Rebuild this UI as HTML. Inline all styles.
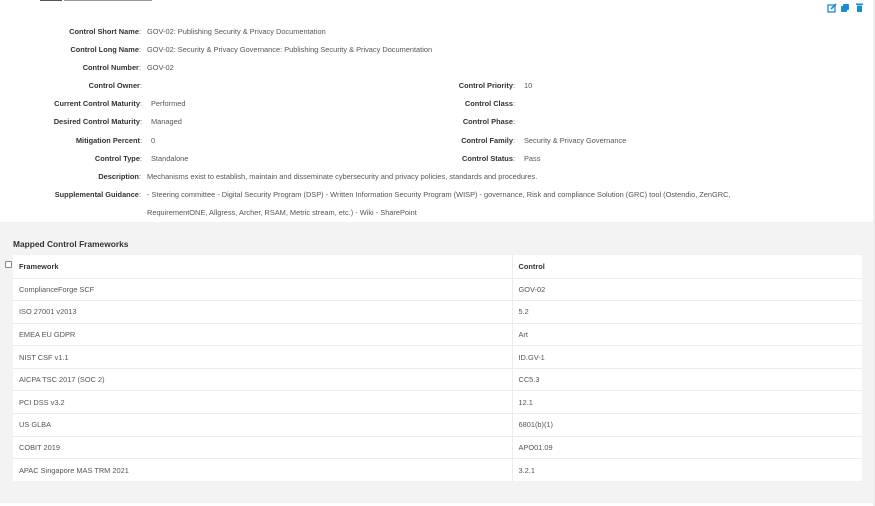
<!DOCTYPE html>
<html><head><meta charset="utf-8"><style>
*{margin:0;padding:0;box-sizing:border-box}
body{width:875px;height:506px;background:#fff;font-family:"Liberation Sans",sans-serif;font-size:7.4px;color:#555;position:relative;overflow:hidden}
.a{position:absolute;white-space:nowrap}
.l{position:absolute;white-space:nowrap;text-align:right;font-weight:bold;color:#333}
.l span{font-weight:normal;color:#555}
.grey{position:absolute;left:0;top:222px;width:873px;height:281px;background:#f3f3f3}
table{position:absolute;left:13px;top:255px;width:849px;border-collapse:collapse;background:#fff}
td{height:22.6px;padding-left:6px;border-bottom:1px solid #ececec;color:#555}
td:first-child{width:499px;border-right:1px solid #ececec}
th{height:23px;text-align:left;padding-left:6px;font-weight:bold;color:#333;border-bottom:1px solid #ececec}
th:first-child{border-right:1px solid #ececec}
</style></head><body>
<div class="a" style="left:40px;top:0;width:22px;height:1px;background:#555"></div>
<div class="a" style="left:64px;top:0;width:88px;height:1px;background:#999"></div>
<div class="a" style="left:873px;top:0;width:2px;height:506px;background:#eee"></div>
<svg class="a" style="left:827px;top:3px" width="40" height="10" viewBox="0 0 40 10">
<rect x="1" y="2" width="7" height="7" fill="none" stroke="#1a8bd6" stroke-width="1.3"/><path d="M4 6 L9 1" stroke="#1a8bd6" stroke-width="1.6"/>
<rect x="16" y="1" width="6" height="6" rx="1" fill="#1a8bd6"/><rect x="14" y="3" width="6" height="6" rx="1" fill="#1a8bd6"/>
<rect x="29" y="0.5" width="7" height="1.5" fill="#1a8bd6"/><rect x="30" y="2.5" width="5" height="6.5" rx="0.5" fill="#1a8bd6"/>
</svg>

<div class="l" style="right:734px;top:27px">Control Short Name<span>:</span></div><div class="a" style="left:147px;top:27px">GOV-02: Publishing Security &amp; Privacy Documentation</div>
<div class="l" style="right:734px;top:45px">Control Long Name<span>:</span></div><div class="a" style="left:147px;top:45px">GOV-02: Security &amp; Privacy Governance: Publishing Security &amp; Privacy Documentation</div>
<div class="l" style="right:734px;top:63px">Control Number<span>:</span></div><div class="a" style="left:147px;top:63px">GOV-02</div>
<div class="l" style="right:733px;top:81px">Control Owner<span>:</span></div>
<div class="l" style="right:733px;top:99px">Current Control Maturity<span>:</span></div><div class="a" style="left:151px;top:99px">Performed</div>
<div class="l" style="right:733px;top:117px">Desired Control Maturity<span>:</span></div><div class="a" style="left:151px;top:117px">Managed</div>
<div class="l" style="right:733px;top:136px">Mitigation Percent<span>:</span></div><div class="a" style="left:151px;top:136px">0</div>
<div class="l" style="right:733px;top:154px">Control Type<span>:</span></div><div class="a" style="left:151px;top:154px">Standalone</div>
<div class="l" style="right:734px;top:172px">Description<span>:</span></div><div class="a" style="left:147px;top:172px">Mechanisms exist to establish, maintain and disseminate cybersecurity and privacy policies, standards and procedures.</div>
<div class="l" style="right:734px;top:190px">Supplemental Guidance<span>:</span></div><div class="a" style="left:147px;top:190px">- Steering committee - Digital Security Program (DSP) - Written Information Security Program (WISP) - governance, Risk and compliance Solution (GRC) tool (Ostendio, ZenGRC,</div>
<div class="a" style="left:147px;top:208px">RequirementONE, Allgress, Archer, RSAM, Metric stream, etc.) - Wiki - SharePoint</div>

<div class="l" style="right:360px;top:81px">Control Priority<span>:</span></div><div class="a" style="left:524px;top:81px">10</div>
<div class="l" style="right:360px;top:99px">Control Class<span>:</span></div>
<div class="l" style="right:360px;top:117px">Control Phase<span>:</span></div>
<div class="l" style="right:360px;top:136px">Control Family<span>:</span></div><div class="a" style="left:524px;top:136px">Security &amp; Privacy Governance</div>
<div class="l" style="right:360px;top:154px">Control Status<span>:</span></div><div class="a" style="left:524px;top:154px">Pass</div>

<div class="grey"></div>
<div class="a" style="left:13px;top:239px;font-weight:bold;font-size:8.4px;color:#333">Mapped Control Frameworks</div>
<div class="a" style="left:5px;top:261px;width:7px;height:7px;border:1px solid #888;background:#fff;border-radius:1px"></div>
<table>
<tr><th>Framework</th><th>Control</th></tr>
<tr><td>ComplianceForge SCF</td><td>GOV-02</td></tr>
<tr><td>ISO 27001 v2013</td><td>5.2</td></tr>
<tr><td>EMEA EU GDPR</td><td>Art</td></tr>
<tr><td>NIST CSF v1.1</td><td>ID.GV-1</td></tr>
<tr><td>AICPA TSC 2017 (SOC 2)</td><td>CC5.3</td></tr>
<tr><td>PCI DSS v3.2</td><td>12.1</td></tr>
<tr><td>US GLBA</td><td>6801(b)(1)</td></tr>
<tr><td>COBIT 2019</td><td>APO01.09</td></tr>
<tr><td style="border-bottom:none">APAC Singapore MAS TRM 2021</td><td style="border-bottom:none">3.2.1</td></tr>
</table>
</body></html>
